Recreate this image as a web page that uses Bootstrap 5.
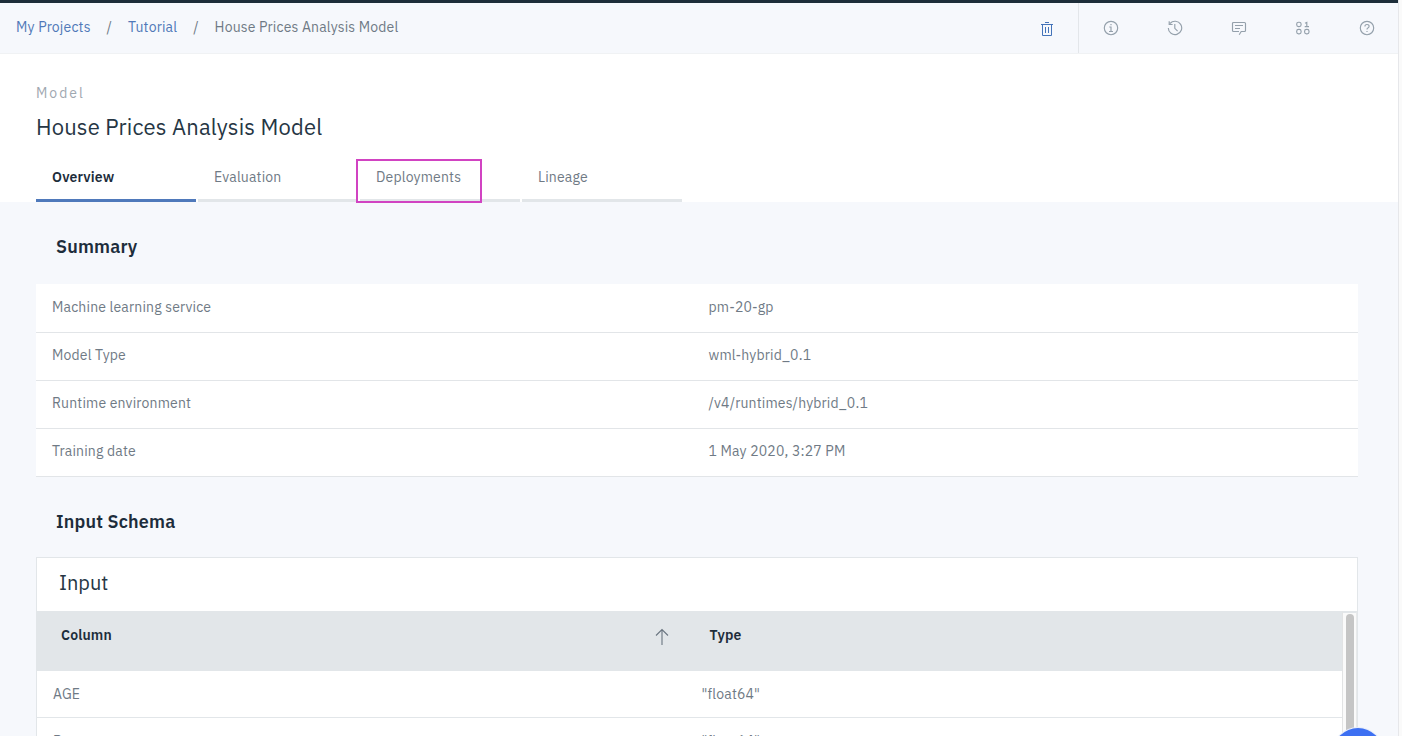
<!DOCTYPE html>
<html lang="en">
<head>
<meta charset="utf-8">
<title>House Prices Analysis Model</title>
<meta name="viewport" content="width=device-width, initial-scale=1">
<link href="https://cdn.jsdelivr.net/npm/bootstrap@5.3.0/dist/css/bootstrap.min.css" rel="stylesheet">
<style>
body{font-family:"IBM Plex Sans",Roboto,sans-serif;font-size:14px;line-height:20px;color:#6f7a85;background:#fafafa;letter-spacing:.16px;height:736px;overflow:hidden}
.page{width:1399px;height:736px;background:#f6f8fc;border-right:1px solid #e6e7ea}
.topline{height:3px;background:#1d2d39}
.toolbar{height:51px;border-bottom:1px solid #f0f2f4;margin-right:-1px}
.crumbs{padding:14px 0 0 16px}
.crumbs a{color:#5078b8;text-decoration:none}
.sep{width:37.4px;text-align:center}
.tool{width:64px;height:50px}
.tool svg{fill:none;stroke:#94a0ab;stroke-width:1.15;display:block}
.tool.trash{border-right:1px solid #e3e6ea;padding-top:2px}
.tool.trash svg{stroke:#4373b9;stroke-width:1}
.hero{height:148px;padding:29px 36px 0}
.kicker{color:#9fa8b1;letter-spacing:2px}
.hero h1{font-size:22px;line-height:28px;font-weight:400;color:#263644;margin:10px 0 0;letter-spacing:.16px}
.tabs{margin-top:18px;gap:2px}
.tabs a{width:160px;height:43px;padding:8px 16px;border-bottom:3px solid #e2e6e9;color:#6f7a85;text-decoration:none}
.tabs a.active{border-color:#4f79bb;color:#1d2d3b;font-weight:600}
.marker{left:-4px;top:0;width:126px;height:44px;border:2px solid #d143c2;z-index:2}
.sect{font-size:18px;line-height:24px;font-weight:600;color:#1d2d3b;margin:0 0 0 20px;letter-spacing:.16px}
.sect.second{margin-top:33px}
.main{padding:33px 40px 0 36px}
.facts{margin-top:25px;background:#fff}
.facts>div{height:48px;border-bottom:1px solid #e2e5e8;padding:12px 16px 0}
.facts>div:first-child{height:49px;padding-top:13px}
.facts .key{width:656.5px}
.schema{margin-top:23px;height:179px;background:#fff;border:1px solid #e2e6e9;border-bottom:0}
.schema h3{height:53px;margin:0;padding:13px 22px 0;font-size:20px;line-height:24px;color:#263644;font-weight:400;letter-spacing:0}
.grid-head{height:60px;background:#e2e6e9;color:#1d2d3b;font-weight:600;padding:14px 0 0 24px}
.grid-head .key{width:648.6px}
.grid-row{height:47px;border-bottom:1px solid #e2e6e9;padding:13px 0 0 16px}
.grid-row .key{width:648.6px}
.arrow{fill:none;stroke:#6a7580;stroke-width:1.1;margin:3px 41px 0 0}
.track{width:15px;background:#fafafa;border-left:1px solid #e2e3e4;border-top:2px solid #e2e6e9;border-right:1px solid #e9eaeb;padding:1px 2px 0 3px}
.thumb{width:8px;height:140px;border-radius:4px;background:#c5c5c5}
.chat{right:15px;top:728px;width:50px;height:50px;border-radius:50%;background:#3d70f2;box-shadow:0 0 0 1px #e6ecfa}
</style>
</head>
<body>
<div class="page position-relative overflow-hidden">
  <div class="topline"></div>
  <header class="toolbar d-flex justify-content-between">
    <nav class="crumbs d-flex"><a href="#">My Projects</a><span class="sep">/</span><a href="#">Tutorial</a><span class="sep">/</span><span>House Prices Analysis Model</span></nav>
    <div class="d-flex">
      <div class="tool trash d-flex align-items-center justify-content-center"><svg width="16" height="16" viewBox="0 0 16 16"><path d="M2 3.5h12M3.5 3.5v11h9v-11M6 1.5h4M6.5 6v6M9.5 6v6"/></svg></div>
      <div class="tool d-flex align-items-center justify-content-center"><svg width="16" height="16" viewBox="0 0 16 16"><circle cx="8" cy="8" r="6.7"/><path d="M6.3 7H8v4.3M6 11.5h4M7.4 4.6h1.2"/></svg></div>
      <div class="tool d-flex align-items-center justify-content-center"><svg width="16" height="16" viewBox="0 0 16 16"><path d="M1.3 8A6.7 6.7 0 1 0 3 3.5M2.2 1.2v3.3h3.4M7.8 4v4.3l2.8 2.8"/></svg></div>
      <div class="tool d-flex align-items-center justify-content-center"><svg width="16" height="16" viewBox="0 0 16 16"><path d="M8.2 14.7l2-3.2h3.3q1 0 1-1v-7q0-1-1-1h-11q-1 0-1 1v7q0 1 1 1H8M4 5.5h8M4 8.5h5"/></svg></div>
      <div class="tool d-flex align-items-center justify-content-center"><svg width="16" height="16" viewBox="0 0 16 16"><rect x="1.7" y="2.2" width="4.4" height="4.4" rx="1.9"/><rect x="1.7" y="9.4" width="4.4" height="4.4" rx="1.9"/><rect x="9.6" y="9.4" width="4.4" height="4.4" rx="1.9"/><path d="M10 3.3l1.8-.8v4M9.7 6.6H14"/></svg></div>
      <div class="tool d-flex align-items-center justify-content-center"><svg width="16" height="16" viewBox="0 0 16 16"><circle cx="8" cy="8" r="6.7"/><path d="M5.9 6.5q0-2 2.1-2t2.1 1.8q0 1.2-1.2 1.7-.9.4-.9 1.5M8 11v1.1"/></svg></div>
    </div>
  </header>
  <section class="hero bg-white">
    <div class="kicker">Model</div>
    <h1>House Prices Analysis Model</h1>
    <nav class="tabs d-flex">
      <a class="active" href="#">Overview</a>
      <a href="#">Evaluation</a>
      <a class="position-relative" href="#">Deployments<span class="marker position-absolute"></span></a>
      <a href="#">Lineage</a>
    </nav>
  </section>
  <main class="main">
    <h2 class="sect">Summary</h2>
    <div class="facts">
      <div class="d-flex"><span class="key">Machine learning service</span><span>pm-20-gp</span></div>
      <div class="d-flex"><span class="key">Model Type</span><span>wml-hybrid_0.1</span></div>
      <div class="d-flex"><span class="key">Runtime environment</span><span>/v4/runtimes/hybrid_0.1</span></div>
      <div class="d-flex"><span class="key">Training date</span><span>1 May 2020, 3:27 PM</span></div>
    </div>
    <h2 class="sect second">Input Schema</h2>
    <div class="schema overflow-hidden">
      <h3>Input</h3>
      <div class="d-flex">
        <div class="flex-grow-1">
          <div class="grid-head d-flex"><span class="key d-flex justify-content-between align-items-start">Column<svg class="arrow" width="14" height="18" viewBox="0 0 14 18"><path d="M7 17V1.5M1 7.5l6-6 6 6"/></svg></span><span>Type</span></div>
          <div class="grid-row d-flex"><span class="key">AGE</span><span>"float64"</span></div>
          <div class="grid-row d-flex"><span class="key">B</span><span>"float64"</span></div>
        </div>
        <div class="track"><div class="thumb"></div></div>
      </div>
    </div>
  </main>
  <div class="chat position-absolute"></div>
</div>
<script src="https://cdn.jsdelivr.net/npm/bootstrap@5.3.0/dist/js/bootstrap.bundle.min.js"></script>
</body>
</html>
